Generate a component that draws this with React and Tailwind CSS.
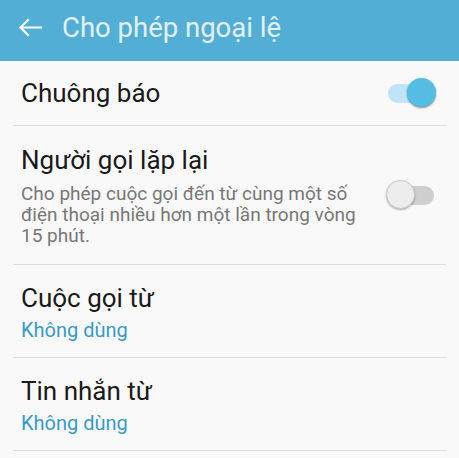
import React, { useState } from 'react';

const Toggle = ({ on, onChange }) => (
  <button
    type="button"
    onClick={onChange}
    className="relative w-[50px] h-[30px] shrink-0"
  >
    <span
      className={
        on
          ? 'absolute left-[2px] top-[6px] w-[44px] h-[19px] rounded-full bg-[#bfe4f3]'
          : 'absolute left-[4px] top-[6px] w-[44px] h-[19px] rounded-full bg-[#cfcfcf]'
      }
    />
    <span
      className={
        on
          ? 'absolute left-[21px] top-0 w-[29px] h-[29px] rounded-full bg-[#55bce3] shadow-[0_1px_2px_rgba(0,0,0,0.45)]'
          : 'absolute left-0 top-0 w-[29px] h-[29px] rounded-full bg-[#ededed] border border-[#c9c9c9] shadow-[0_1px_2px_rgba(0,0,0,0.3)]'
      }
    />
  </button>
);

const Divider = () => <div className="mx-[13px] h-px bg-[#dedede]" />;

const SelectRow = ({ title, value }) => (
  <div className="h-[92px] px-[21px] pt-[17px]">
    <div className="text-[26px] leading-[32px] text-[#1a1a1a]">{title}</div>
    <div className="mt-[4px] text-[20px] leading-[24px] text-[#3a9ac6]">{value}</div>
  </div>
);

export default function App() {
  const [ringtone, setRingtone] = useState(true);
  const [repeat, setRepeat] = useState(false);

  return (
    <div className="min-h-screen bg-[#f9f9f9]" style={{ fontFamily: 'Roboto, "Noto Sans", sans-serif' }}>
      <div className="h-[61px] bg-[#52aed4] flex items-center">
        <svg width="62" height="61" viewBox="0 0 62 61" className="shrink-0">
          <path d="M20.5 27.5 H41 M20.5 27.5 L28 20 M20.5 27.5 L28 35" stroke="#ffffff" strokeWidth="2.2" fill="none" strokeLinecap="square" />
        </svg>
        <h1 className="text-[27.5px] leading-[32px] text-[#e2f1f8] -mt-[6px]">Cho phép ngoại lệ</h1>
      </div>

      <div className="h-[64px] pl-[21px] pr-[23px] flex items-center justify-between">
        <span className="text-[26px] leading-[32px] text-[#1a1a1a]">Chuông báo</span>
        <Toggle on={ringtone} onChange={() => setRingtone(!ringtone)} />
      </div>
      <Divider />

      <div className="h-[138px] pl-[21px] pr-[23px] pt-[18px] flex justify-between">
        <div className="w-[345px]">
          <div className="text-[26px] leading-[32px] text-[#1a1a1a]">Người gọi lặp lại</div>
          <div className="mt-[7px] text-[19px] leading-[21px] text-[#777777]">
            Cho phép cuộc gọi đến từ cùng một số điện thoại nhiều hơn một lần trong vòng 15 phút.
          </div>
        </div>
        <div className="mt-[36px]">
          <Toggle on={repeat} onChange={() => setRepeat(!repeat)} />
        </div>
      </div>
      <Divider />

      <SelectRow title="Cuộc gọi từ" value="Không dùng" />
      <Divider />
      <SelectRow title="Tin nhắn từ" value="Không dùng" />
      <Divider />
    </div>
  );
}
